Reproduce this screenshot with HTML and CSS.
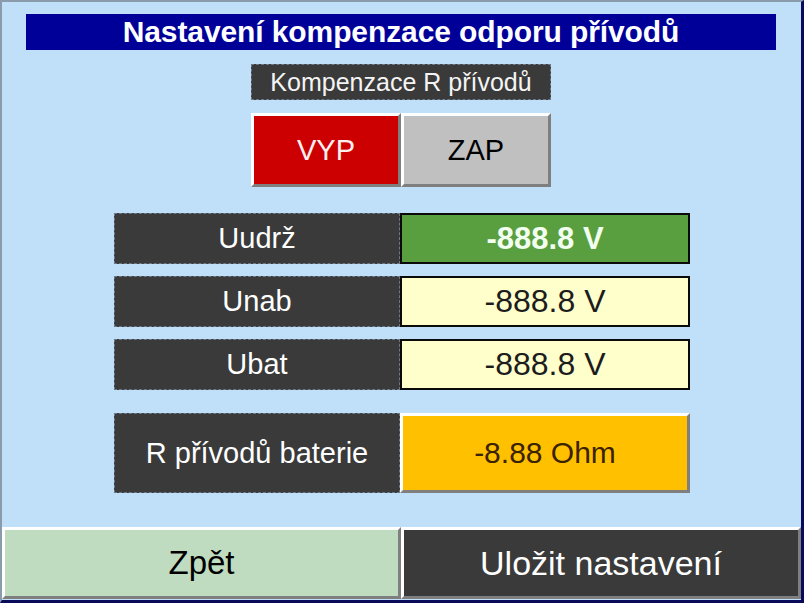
FILE: index.html
```html
<!DOCTYPE html>
<html lang="cs">
<head>
<meta charset="utf-8">
<title>Nastavení kompenzace odporu přívodů</title>
<link rel="stylesheet" href="styles.css">
</head>
<body>
<div class="screen">
  <div class="title">Nastavení kompenzace odporu přívodů</div>
  <div class="tag">Kompenzace R přívodů</div>
  <div class="toggle">
    <div class="btn vyp">VYP</div>
    <div class="btn zap">ZAP</div>
  </div>
  <div class="rows">
    <div class="row">
      <div class="label">Uudrž</div>
      <div class="value green">-888.8 V</div>
    </div>
    <div class="row">
      <div class="label">Unab</div>
      <div class="value cream">-888.8 V</div>
    </div>
    <div class="row">
      <div class="label">Ubat</div>
      <div class="value cream">-888.8 V</div>
    </div>
  </div>
  <div class="row tall">
    <div class="label">R přívodů baterie</div>
    <div class="btn orange">-8.88 Ohm</div>
  </div>
  <div class="footer">
    <div class="btn back">Zpět</div>
    <div class="btn save">Uložit nastavení</div>
  </div>
</div>
</body>
</html>
```
FILE: styles.css
```css
* { box-sizing: border-box; }
html, body { margin: 0; padding: 0; }
body {
  font-family: "Liberation Sans", Arial, sans-serif;
  background: #c0dff9;
}
.screen {
  width: 804px;
  height: 603px;
  background: #c0dff9;
  border-top: 2px solid #8a9cac;
  border-left: 2px solid #8a9cac;
  border-right: 3px solid #0a0a5a;
  border-bottom: 3px solid #0a0a5a;
  display: flex;
  flex-direction: column;
  align-items: flex-start;
}
.title {
  margin: 12px 0 0 24px;
  width: 750px;
  height: 36px;
  background: #000099;
  color: #fff;
  font-weight: bold;
  font-size: 30px;
  line-height: 36px;
  text-align: center;
  letter-spacing: -0.1px;
}
.tag {
  margin: 14px 0 0 249px;
  width: 300px;
  height: 36px;
  background: #3a3a3a;
  border: 1px dashed #6c7886;
  color: #f4f4f4;
  font-size: 25px;
  line-height: 34px;
  text-align: center;
}
.toggle {
  margin: 13px 0 0 249px;
  display: flex;
  height: 74px;
}
.btn {
  display: flex;
  align-items: center;
  justify-content: center;
  border-top: 3px solid #ffffff;
  border-left: 3px solid #ffffff;
  border-right: 3px solid #7f7f7f;
  border-bottom: 3px solid #7f7f7f;
}
.vyp {
  width: 150px;
  background: #cc0000;
  color: #fff0f0;
  font-size: 29px;
}
.zap {
  width: 150px;
  background: #c0c0c0;
  color: #000;
  font-size: 29px;
}
.rows {
  margin: 26px 0 0 112px;
  display: flex;
  flex-direction: column;
  gap: 12px;
}
.row {
  display: flex;
  height: 51px;
}
.label {
  width: 286px;
  background: #3a3a3a;
  border: 1px dashed #6c7886;
  color: #fff;
  font-size: 29px;
  display: flex;
  align-items: center;
  justify-content: center;
}
.value {
  width: 290px;
  border: 2px solid #0a0a0a;
  font-size: 32px;
  display: flex;
  align-items: center;
  justify-content: center;
}
.green {
  background: #5a9f3f;
  color: #f2fff0;
  font-weight: bold;
  font-size: 31px;
}
.cream {
  background: #ffffcc;
  color: #1c1c1c;
}
.tall {
  margin: 23px 0 0 112px;
  height: 80px;
}
.orange {
  width: 290px;
  background: #ffc000;
  color: #3b2200;
  font-size: 30px;
}
.footer {
  margin-top: 34px;
  display: flex;
  height: 72px;
}
.back {
  width: 399px;
  background: #c0dcc0;
  color: #000;
  font-size: 33px;
}
.save {
  width: 400px;
  background: #3a3a3a;
  color: #fff;
  font-size: 34px;
}
```
